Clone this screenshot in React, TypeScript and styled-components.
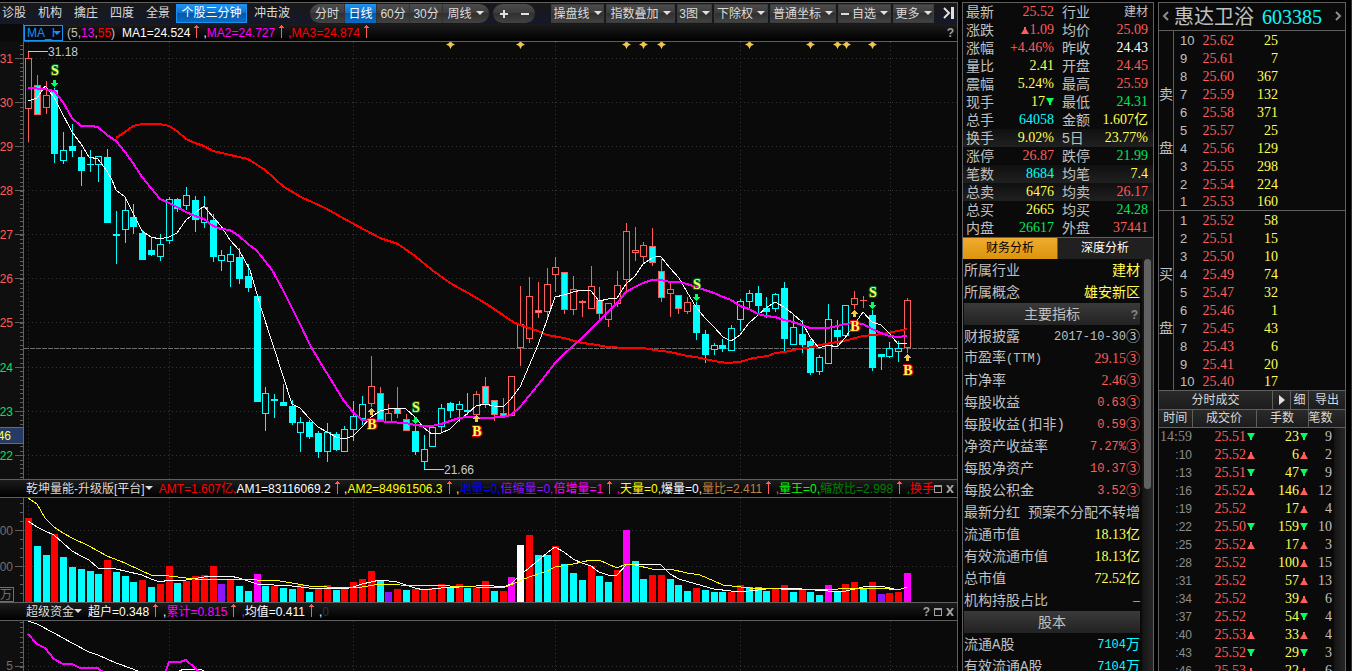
import React from "react";
import styled, { createGlobalStyle, css } from "styled-components";

const C = {
  bg: "#0a0a0a",
  line: "#5f5f5f",
  label: "#c0c0c0",
  white: "#ffffff",
  red: "#ff5c5c",
  green: "#00e65c",
  yellow: "#ffff54",
  cyan: "#00ffff",
  magenta: "#ff00ff",
  up: "#ff0000",
  grey: "#8c8c8c",
};

const sans = `"Liberation Sans", "Noto Sans CJK SC", sans-serif`;
const serif = `"Liberation Serif", "Noto Sans CJK SC", serif`;
const mono = `"Liberation Mono", "Noto Sans CJK SC", monospace`;

const GlobalStyle = createGlobalStyle`
  *, *::before, *::after { box-sizing: border-box; }
  body { margin: 0; background: #000; color: ${C.label}; font: 12px/18px ${sans}; overflow: hidden; }
  button, select { font: inherit; color: inherit; margin: 0; padding: 0; border: 0; background: none; cursor: pointer; }
  table { border-collapse: collapse; border-spacing: 0; }
  th, td { padding: 0; font-weight: 400; white-space: nowrap; }
  dl, dt, dd, h1, h2 { margin: 0; font-weight: 400; }
`;

/* ---------- page frame ---------- */

const Page = styled.main`
  display: grid;
  grid-template-columns: minmax(0, 1fr) 192px 188px;
  column-gap: 4px;
  height: 100vh;
  padding: 2px 5px 0 0;
  border-right: 1px solid #333;
  overflow: hidden;
`;

const ChartPanel = styled.section`
  display: flex;
  flex-direction: column;
  min-width: 0;
  min-height: 0;
  overflow: hidden;
  background: ${C.bg};
  border-top: 1px solid ${C.line};
  border-right: 1px solid ${C.line};
`;

const SidePanel = styled.section`
  display: flex;
  flex-direction: column;
  min-height: 0;
  overflow: hidden;
  background: ${C.bg};
  border: solid ${C.line};
  border-width: 1px 1px 0;
`;

/* ---------- toolbar ---------- */

const Toolbar = styled.nav`
  display: flex;
  align-items: center;
  flex: none;
  height: 21px;
  padding-left: 2px;
  background: linear-gradient(#191919, #15182a);
  color: #dcdcdc;
  white-space: nowrap;
  & > * { flex: none; }
`;

const LinkGroup = styled.div`
  display: flex;
  gap: 12px;
`;

const TextButton = styled.button`
  height: 19px;
  line-height: 19px;
`;

const blueFill = css`
  background: linear-gradient(#1f93ee, #0c6fd0 50%, #0459a8 50%, #0a6cc4);
  color: #fff;
`;

const ActiveButton = styled.button`
  ${blueFill}
  width: 71px;
  height: 19px;
  margin: 0 7px 0 6px;
  border: 1px solid #1a90f0;
  line-height: 17px;
`;

const Pill = styled.div<{ $left: number }>`
  display: flex;
  height: 19px;
  margin-left: ${(p) => p.$left}px;
  border-radius: 10px;
  overflow: hidden;
  background: linear-gradient(#4b4b4b, #3d3d3d 48%, #303030 50%, #424242);
`;

const PeriodButton = styled.button<{ $width: number; $active?: boolean }>`
  display: flex;
  align-items: center;
  justify-content: center;
  gap: 4px;
  width: ${(p) => p.$width}px;
  border-right: 1px solid #333;
  ${(p) => p.$active && blueFill}
`;

const ZoomButton = styled.button`
  display: flex;
  align-items: center;
  justify-content: center;
  width: 21px;
`;

const MenuGroup = styled.div`
  display: flex;
  gap: 2px;
  margin-left: 16px;
`;

const MenuButton = styled.button<{ $width: number }>`
  display: flex;
  align-items: center;
  justify-content: center;
  gap: 4px;
  width: ${(p) => p.$width}px;
  height: 19px;
  border: 1px solid #3c3c3c;
  background: linear-gradient(#4b4b4b, #3d3d3d 48%, #303030 50%, #424242);
`;

const CollapseButton = styled.button`
  display: flex;
  margin: 0 2px 0 auto;
`;

/* ---------- chart headers ---------- */

const PlotHeader = styled.header`
  display: flex;
  align-items: center;
  flex: none;
  height: 18px;
  margin-left: 23px;
  padding: 0 3px;
  border-left: 1px solid ${C.line};
  border-bottom: 1px solid ${C.line};
  background: linear-gradient(#1c1c1c, #000);
  white-space: nowrap;
`;

const SubHeader = styled(PlotHeader)`
  height: 19px;
  margin-left: 0;
  padding-left: 26px;
  border-left: 0;
  border-top: 1px solid ${C.line};
`;

const SelectWrap = styled.label`
  position: relative;
  display: flex;
  margin: 0 4px 0 -3px;
`;

const IndicatorSelect = styled.select`
  appearance: none;
  width: 39px;
  height: 16px;
  padding: 0 0 0 2px;
  border: 1px solid #1a90f0;
  background: #050a12;
  color: #1a90f0;
  line-height: 14px;
  text-overflow: clip;
`;

const SelectCaret = styled.span`
  position: absolute;
  right: 2px;
  top: 6px;
  display: flex;
  pointer-events: none;
`;

const Readings = styled.div`
  display: flex;
  flex: 1;
  min-width: 0;
  overflow: hidden;
  white-space: pre;
`;

const Reading = styled.span<{ $color: string }>`
  color: ${(p) => p.$color};
`;

const NameButton = styled.button`
  display: flex;
  align-items: center;
  margin-right: 6px;
  color: #dcdcdc;
`;

const Params = styled.span`
  margin-right: 7px;
`;

const WindowButtons = styled.div`
  display: flex;
  align-items: center;
  gap: 4px;
  flex: none;
  color: #a0a0a0;
`;

const IconButton = styled.button`
  display: flex;
  font-weight: 700;
  line-height: 16px;
`;

const Plot = styled.svg<{ $height?: number }>`
  display: block;
  width: 100%;
  ${(p) => (p.$height ? `flex: none; height: ${p.$height}px;` : "flex: 1; min-height: 0;")}
  font: 12px ${sans};
`;

/* ---------- quote panel ---------- */

const QuoteTable = styled.table`
  flex: none;
  width: 100%;
  table-layout: fixed;
  border-bottom: 1px solid ${C.line};
`;

const QuoteRow = styled.tr<{ $tint?: boolean }>`
  height: 18px;
  ${(p) => p.$tint && "background: linear-gradient(#101010, #202020);"}
`;

const QuoteLabel = styled.th`
  padding-left: 3px;
  font-size: 14px;
  line-height: 18px;
  text-align: left;
`;

const QuoteValue = styled.td<{ $color: string; $small?: boolean }>`
  padding-right: 5px;
  font: ${(p) => (p.$small ? 12 : 14)}px/18px ${serif};
  color: ${(p) => p.$color};
  text-align: right;
`;

const Tabs = styled.div`
  display: grid;
  grid-template-columns: 1fr 1fr;
  flex: none;
  height: 21px;
`;

const Tab = styled.button<{ $active?: boolean }>`
  line-height: 21px;
  color: ${(p) => (p.$active ? "#000" : "#fff")};
  background: ${(p) => (p.$active ? "linear-gradient(#f0ac30, #dc940c)" : "#202020")};
  border-right: 1px solid ${(p) => (p.$active ? C.line : "transparent")};
`;

const Scroller = styled.div`
  display: flex;
  flex: 1;
  min-height: 0;
  overflow: hidden;
`;

const Facts = styled.dl`
  flex: 1;
  min-width: 0;
  padding: 0 2px 0 1px;
`;

const Fact = styled.div`
  display: flex;
  align-items: center;
  justify-content: space-between;
  height: 22px;
  padding-top: 1px;
  font-size: 14px;
  white-space: nowrap;
`;

const FactName = styled.dt`
  font-family: ${mono};
`;

const FactValue = styled.dd<{ $color: string; $font: string }>`
  display: flex;
  align-items: center;
  color: ${(p) => p.$color};
  font-family: ${(p) => p.$font};
`;

const Figure = styled.span<{ $mono?: boolean }>`
  font-size: ${(p) => (p.$mono ? 12 : 14)}px;
`;

const FactHeading = styled.dt`
  display: flex;
  justify-content: center;
  position: relative;
  height: 22px;
  line-height: 22px;
  font-size: 14px;
  background: linear-gradient(#3a3a3a, #222);
`;

const HelpMark = styled.button`
  position: absolute;
  right: 2px;
  top: 2px;
  font: 700 12px/20px ${sans};
  color: #888;
`;

const Track = styled.div`
  flex: none;
  width: 11px;
  padding: 0 2px;
  background: linear-gradient(90deg, #141414, #262626);
`;

const Thumb = styled.div`
  height: 230px;
  border-radius: 4px;
  background: #616161;
`;

/* ---------- order book ---------- */

const StockTitle = styled.header`
  display: flex;
  align-items: center;
  gap: 5px;
  flex: none;
  height: 28px;
  padding: 0 3px;
  border-bottom: 1px solid ${C.line};
`;

const StockName = styled.h1`
  display: flex;
  flex: 1;
  gap: 8px;
  font: 20px/26px ${serif};
`;

const Code = styled.span`
  color: ${C.cyan};
`;

const Book = styled.div`
  display: flex;
  flex: none;
  border-bottom: 1px solid ${C.line};
`;

const Side = styled.div`
  display: flex;
  flex-direction: column;
  align-items: center;
  justify-content: center;
  gap: 40px;
  width: 15px;
  border-right: 1px solid ${C.line};
  font-size: 14px;
  line-height: 14px;
`;

const BookTable = styled.table`
  width: 104px;
  table-layout: fixed;
`;

const Level = styled.tr`
  height: 18px;
  &:last-child { height: 17px; }
`;

const LevelNo = styled.th`
  padding-left: 6px;
  font-size: 13px;
  line-height: 17px;
  text-align: left;
`;

const Num = styled.td<{ $color: string }>`
  font: 14px/17px ${serif};
  color: ${(p) => p.$color};
  text-align: right;
`;

const Bar = styled.div`
  display: flex;
  flex: none;
  height: 19px;
  border-bottom: 1px solid ${C.line};
  background: linear-gradient(#2a2a2a, #1c1c1c);
  color: #d8d8d8;
`;

const BarTitle = styled.h2`
  flex: 1;
  font-size: 12px;
  text-align: center;
`;

const BarButton = styled.button<{ $width: number }>`
  display: flex;
  align-items: center;
  justify-content: center;
  width: ${(p) => p.$width}px;
  border-left: 1px solid ${C.line};
`;

const Trades = styled.table`
  width: 100%;
  flex: none;
  table-layout: fixed;
`;

const TradeHead = styled.th`
  height: 17px;
  border-right: 1px solid ${C.line};
  border-bottom: 1px solid ${C.line};
  background: linear-gradient(#2a2a2a, #1c1c1c);
  color: #d8d8d8;
  font-size: 12px;
  line-height: 16px;
  &:last-child { border-right: 0; text-align: left; }
`;

const TradeTime = styled.td<{ $first: boolean }>`
  height: 18px;
  font: ${(p) => (p.$first ? `14px/18px ${serif}` : `12px/18px ${sans}`)};
  color: ${C.grey};
  text-align: right;
`;

const TradeNum = styled(Num)`
  line-height: 18px;
`;

const TradeCount = styled(TradeNum)`
  padding-right: 2px;
`;

const Mark = styled.span`
  display: inline-flex;
  width: 9px;
  justify-content: center;
`;

const TradeList = styled.div`
  flex: 1;
  min-width: 0;
`;

/* ---------- small glyphs ---------- */

const Caret = ({ color = "#e0e0e0" }: { color?: string }) => (
  <svg width="8" height="5" viewBox="0 0 8 5" aria-hidden="true">
    <path d="M0 0h8L4 4z" fill={color} />
  </svg>
);

const UpArrow = ({ wide }: { wide?: boolean }) => (
  <svg width={wide ? 14 : 13} height="18" shapeRendering="crispEdges" aria-hidden="true">
    <path d="M6 1h1v13H6zM5 2h3v1H5zM4 3h5v1H4z" fill={C.red} />
  </svg>
);

const Tri = ({ dir }: { dir?: string }) => (
  <Mark>
    {dir && (
      <svg width="8" height="8" viewBox="0 0 8 8" aria-hidden="true">
        {dir === "u" ? (
          <path d="M0 8h8L5 3V1H3v2z" fill={C.red} />
        ) : (
          <path d="M0 0h8L5 5v2H3V5z" fill="#00ff60" />
        )}
      </svg>
    )}
  </Mark>
);

const MaxIcon = () => (
  <svg width="8" height="8" viewBox="0 0 8 8" shapeRendering="crispEdges" aria-hidden="true">
    <path d="M0 0h8v8H0zM1 2v5h6V2z" fill="#a0a0a0" fillRule="evenodd" />
  </svg>
);

const CloseIcon = () => (
  <svg width="8" height="8" viewBox="0 0 8 8" aria-hidden="true">
    <path d="M1 0l6 8M7 0L1 8" stroke="#a0a0a0" strokeWidth="2" />
  </svg>
);

const Chevron = ({ left }: { left?: boolean }) => (
  <svg width="7" height="10" viewBox="0 0 7 10" aria-hidden="true">
    <path d={left ? "M6 1L2 5l4 4" : "M1 1l4 4-4 4"} stroke="#8c8c8c" strokeWidth="2" fill="none" />
  </svg>
);

/* ---------- chart data ---------- */

/* Kinds: r hollow red, c hollow cyan, C solid cyan, m solid cyan with a red edge. */
type Candle = [high: number, low: number, top: number, bottom: number, kind: string];

const candles: Candle[] = [
  [51, 142, 58, 109, "r"], [75, 114, 85, 115, "m"], [81, 114, 95, 108, "r"], [88, 163, 90, 154, "C"],
  [132, 164, 150, 161, "c"], [124, 157, 146, 151, "C"], [150, 186, 157, 171, "C"], [150, 172, 164, 165, "C"],
  [156, 182, 156, 165, "c"], [149, 223, 157, 223, "C"], [211, 264, 234, 236, "C"], [199, 243, 210, 230, "c"],
  [204, 234, 217, 227, "C"], [230, 260, 233, 260, "C"], [237, 256, 250, 255, "C"], [234, 261, 244, 257, "c"],
  [197, 244, 199, 241, "c"], [198, 212, 199, 209, "C"], [187, 210, 195, 206, "c"], [196, 232, 200, 220, "C"],
  [196, 228, 207, 223, "c"], [214, 262, 220, 257, "C"], [250, 271, 255, 261, "c"], [246, 287, 254, 262, "c"],
  [248, 284, 257, 279, "C"], [264, 292, 276, 288, "C"], [296, 402, 296, 402, "C"], [387, 431, 393, 414, "c"],
  [394, 418, 399, 401, "C"], [384, 406, 402, 406, "C"], [400, 425, 406, 423, "C"], [417, 452, 422, 433, "c"],
  [420, 439, 422, 437, "C"], [431, 458, 433, 452, "C"], [423, 462, 432, 452, "c"], [432, 451, 434, 450, "C"],
  [426, 452, 429, 452, "c"], [401, 441, 416, 430, "c"], [396, 425, 404, 419, "c"], [356, 407, 386, 404, "r"],
  [387, 420, 393, 420, "m"], [404, 422, 413, 423, "r"], [387, 418, 408, 414, "m"], [414, 431, 419, 431, "m"],
  [424, 455, 431, 452, "C"], [435, 470, 449, 462, "c"], [427, 447, 427, 447, "c"], [404, 432, 408, 427, "c"],
  [402, 418, 403, 411, "C"], [401, 422, 404, 410, "c"], [393, 415, 410, 412, "C"], [391, 417, 394, 415, "r"],
  [377, 408, 386, 404, "m"], [400, 421, 400, 415, "m"], [398, 416, 413, 416, "m"], [376, 416, 376, 416, "r"],
  [286, 366, 324, 348, "r"], [277, 343, 296, 339, "r"], [282, 318, 310, 313, "m"], [268, 317, 284, 312, "r"],
  [257, 292, 267, 275, "r"], [272, 314, 272, 310, "m"], [276, 315, 289, 310, "r"], [300, 317, 301, 303, "r"],
  [266, 309, 286, 309, "r"], [287, 322, 300, 314, "m"], [303, 327, 303, 320, "r"], [271, 307, 285, 304, "r"],
  [223, 292, 231, 280, "r"], [227, 261, 250, 253, "r"], [242, 263, 245, 257, "r"], [228, 266, 246, 263, "m"],
  [259, 302, 271, 298, "m"], [283, 317, 289, 294, "r"], [295, 314, 295, 309, "m"], [297, 314, 302, 312, "r"],
  [302, 340, 305, 333, "C"], [330, 363, 334, 355, "C"], [343, 355, 345, 350, "c"], [339, 352, 345, 349, "C"],
  [325, 351, 328, 351, "c"], [299, 331, 301, 320, "c"], [290, 310, 293, 302, "c"], [286, 314, 293, 306, "C"],
  [297, 318, 308, 312, "C"], [293, 312, 294, 309, "c"], [282, 352, 288, 339, "C"], [315, 345, 327, 345, "c"],
  [320, 353, 334, 345, "C"], [339, 375, 341, 373, "C"], [355, 375, 357, 372, "c"], [304, 364, 319, 364, "c"],
  [320, 347, 330, 337, "C"], [305, 336, 305, 336, "c"], [291, 309, 298, 305, "r"], [296, 308, 300, 301, "r"],
  [310, 371, 315, 368, "C"], [354, 370, 354, 357, "C"], [342, 358, 348, 357, "c"], [341, 362, 348, 352, "c"],
  [298, 353, 300, 348, "r"],
];

const candleX = (i: number) => Math.round(28 + 8.79 * i);

const ma5 =
  "28,101 37,98 45,86 54,97 60,109 72,132 81,144 89,157 98,159 107,171 112,180 116,190 125,197 133,213 142,231 151,237 160,239 169,237 177,233 186,220 195,213 204,206 213,217 221,226 230,240 239,250 250,270 261,308 274,348 292,404 300,408 309,418 318,427 327,432 336,437 344,439 353,436 362,427 371,417 380,411 388,409 397,408 406,409 415,417 424,428 432,434 441,433 450,429 459,420 468,413 476,406 485,404 494,406 503,407 511,399 520,387 529,366 538,345 547,320 555,297 564,295 573,292 582,290 591,291 599,301 608,299 617,298 626,284 635,276 643,264 652,258 658,256 661,257 670,268 679,278 687,292 696,307 705,318 714,327 723,337 731,341 740,335 749,323 758,315 766,308 775,302 784,307 793,314 802,322 810,337 819,348 828,345 837,347 845,338 854,325 863,312 872,322 881,325 889,333 898,344 907,343";
const ma13 =
  "28,88 45,89 54,91 63,102 72,118 81,126 91,126 98,127 107,135 116,141 125,152 133,163 142,177 151,188 160,199 169,203 177,207 186,212 195,216 204,219 213,226 221,229 230,230 239,236 248,244 256,250 262,257 272,270 283,290 292,308 301,326 310,345 320,362 328,375 336,388 344,401 353,412 362,420 371,420 388,422 406,423 415,425 424,426 432,426 441,424 450,421 459,418 468,417 485,418 503,417 511,415 520,407 542,380 555,363 564,354 573,346 582,338 591,329 599,321 608,312 617,303 626,292 635,287 643,283 652,280 661,280 670,282 679,282 687,284 696,287 705,290 714,293 723,297 731,300 740,306 749,309 758,314 766,316 775,317 784,320 793,322 802,325 810,328 828,328 837,326 845,324 854,323 863,324 872,329 881,333 889,336 898,337 907,336";
const ma55 =
  "116,138 125,132 133,126 142,124 160,124 169,126 177,131 186,139 195,143 204,146 213,151 239,157 248,159 265,170 284,187 301,197 325,208 350,222 380,238 398,244 415,256 432,270 450,283 468,293 485,303 503,315 513,322 520,325 538,331 547,335 564,338 582,343 591,344 608,347 626,348 643,348 661,351 670,352 687,356 696,357 714,361 727,363 740,362 753,358 768,356 775,353 785,352 798,349 807,348 820,345 837,342 848,340 863,336 883,334 893,332 907,329";

const gridX = [28, 169, 353, 555, 740, 890];
const priceLevels: [string, number][] = [
  ["31", 58], ["30", 102], ["29", 146], ["28", 190], ["27", 234],
  ["26", 278], ["25", 322], ["24", 367], ["23", 411], ["22", 455],
];
const diamonds = [450, 520, 626, 643, 661, 749, 810, 837, 846, 872];
const signals: [string, number, number][] = [
  ["S", 54, 70], ["S", 415, 407], ["S", 696, 284], ["S", 872, 292],
  ["B", 371, 424], ["B", 476, 431], ["B", 854, 326], ["B", 907, 370],
];

const volumeKinds =
  "rccrccccc" + "rccc" + "rcrrcrrrr" + "prccmcrccrcrrcrrrr" + "cprcrrrrcrcrrcrmwrccrcccrccrmccrrcccrcccrrcccrrcrccmcrrcrprrm";
const volumeTops = [
  518, 546, 555, 534, 557, 567, 569, 571, 574, 560, 572, 576, 582, 580, 587, 584, 566, 583, 581, 576, 575, 566, 584,
  579, 586, 591, 574, 586, 586, 588, 589, 584, 592, 589, 585, 590, 589, 582, 579, 571, 581, 592, 589, 590, 589, 589,
  588, 584, 588, 584, 588, 588, 581, 591, 591, 577, 545, 535, 555, 555, 546, 564, 573, 580, 566, 576, 582, 570, 530,
  561, 579, 575, 575, 579, 585, 591, 588, 590, 592, 592, 592, 585, 587, 587, 591, 589, 585, 592, 590, 592, 595, 585,
  591, 584, 582, 589, 582, 594, 593, 592, 573,
];
const volumeFill: Record<string, string> = {
  r: C.up, c: C.cyan, m: C.magenta, p: "#8c14ff", w: "#ffffff",
};
const volumeFast =
  "28,521 37,527 45,531 54,535 63,543 72,551 81,556 89,560 98,568 116,569 125,571 142,575 151,579 160,582 169,580 186,580 204,577 213,576 230,576 239,578 248,581 257,584 274,585 292,586 309,588 344,589 353,587 362,584 380,580 397,582 406,585 415,588 424,590 441,588 459,587 476,586 485,585 503,587 511,584 520,575 529,568 547,553 555,547 564,552 573,559 582,563 591,566 599,572 608,575 617,575 626,565 645,564 661,565 670,574 679,579 696,584 714,589 731,591 749,591 775,588 802,589 828,591 846,591 863,587 881,586 898,590 907,587";
const volumeSlow =
  "28,498 37,504 45,518 54,527 63,533 72,538 89,546 107,556 125,563 142,571 151,575 169,576 186,578 195,579 239,579 257,580 274,580 292,583 309,586 327,587 344,588 362,587 380,584 400,585 450,586 476,587 505,587 515,583 529,577 547,571 555,567 573,564 591,560 599,560 617,568 626,564 635,565 652,569 670,569 687,573 700,575 714,581 723,585 750,588 780,589 830,590 846,588 880,588 898,590 907,587";

/* ---------- plots ---------- */

const range = (from: number, to: number, step: number) => {
  const out: number[] = [];
  for (let v = from; v < to; v += step) out.push(Math.round(v));
  return out;
};

const Grid = ({ top, bottom, rows }: { top: number; bottom: number; rows: number[] }) => (
  <g fill="none" stroke="#363636" strokeDasharray="1 3">
    {gridX.map((x) => (
      <path key={x} d={`M${x + 0.5} ${top}V${bottom}`} />
    ))}
    {rows.map((y) => (
      <line key={y} x1="24" x2="100%" y1={y + 0.5} y2={y + 0.5} />
    ))}
  </g>
);

const Axis = ({ top, bottom, minor, major }: { top: number; bottom: number; minor: number[]; major: number[] }) => (
  <g fill={C.line}>
    <rect x="0" y={top} width="23" height={bottom - top} fill="#0f0f0f" />
    <rect x="23" y={top} width="1" height={bottom - top} />
    {minor.map((y) => (
      <rect key={y} x="20" y={y} width="3" height="1" />
    ))}
    {major.map((y) => (
      <rect key={y} x="15" y={y} width="8" height="1" />
    ))}
  </g>
);

const CandleShape = ({ x, data }: { x: number; data: Candle }) => {
  const [high, low, top, bottom, kind] = data;
  const edge = kind === "r" || kind === "m" ? C.red : C.cyan;
  const inner = kind === "m" || kind === "C" ? C.cyan : C.bg;
  const h = bottom - top;
  return (
    <g>
      <rect x={x} y={high} width="1" height={low - high} fill={edge} />
      <rect x={x - 3} y={top} width="7" height={h} fill={edge} />
      {h > 2 && <rect x={x - 2} y={top + 1} width="5" height={h - 2} fill={inner} />}
    </g>
  );
};

const Signal = ({ kind, x, y }: { kind: string; x: number; y: number }) => {
  const sell = kind === "S";
  return (
    <g>
      {sell ? (
        <path d={`M${x - 1} ${y + 10}h3v3h2l-3 4h-1l-3 -4h2z`} fill="#00ff60" />
      ) : (
        <path d={`M${x} ${y - 16}h1l3 4h-2v3h-3v-3h-2z`} fill="#f0c850" />
      )}
      <text
        x={x + 1}
        y={y + 5}
        textAnchor="middle"
        fontFamily="Liberation Serif"
        fontWeight="700"
        fontSize="14"
        fill="#ffff54"
        stroke={sell ? "#006b30" : "#d00000"}
        strokeWidth="2"
        paintOrder="stroke"
        strokeLinejoin="round"
      >
        {kind}
      </text>
    </g>
  );
};

const PricePlot = () => (
  <Plot $height={437} role="img" aria-label="日线">
    <g transform="translate(0 -42)" shapeRendering="crispEdges">
      <Grid top={42} bottom={479} rows={priceLevels.map((l) => l[1])} />
      <Axis top={42} bottom={479} minor={range(45, 479, 4.41)} major={priceLevels.map((l) => l[1])} />
      {priceLevels.map(([text, y], i) => (
        <text key={text} x="13" y={y + 5} textAnchor="end" fill={i < 7 ? C.red : C.green}>
          {text}
        </text>
      ))}
      <line x1="24" x2="100%" y1="348.5" y2="348.5" stroke="#6e6e6e" strokeDasharray="5 1" />
      {candles.map((c, i) => (
        <CandleShape key={i} x={candleX(i)} data={c} />
      ))}
      <g fill="none">
        <polyline points={ma55} stroke="#ff0000" strokeWidth="2" />
        <polyline points={ma5} stroke="#ffffff" />
        <polyline points={ma13} stroke={C.magenta} strokeWidth="2" />
      </g>
      <g fill="#c8c8c8">
        <rect x="28" y="51" width="20" height="1" />
        <rect x="424" y="469" width="20" height="1" />
        <text x="48" y="56">31.18</text>
        <text x="444" y="474">21.66</text>
      </g>
      <g fill="#f0c850" shapeRendering="auto">
        {diamonds.map((x) => (
          <path key={x} d={`M${x + 0.5} 40l1.5 3 3 1.5-3 1.5-1.5 3-1.5-3-3-1.5 3-1.5z`} />
        ))}
      </g>
      {signals.map(([kind, x, y]) => (
        <Signal key={`${kind}${x}`} kind={kind} x={x} y={y} />
      ))}
      <rect x="0" y="427" width="24" height="17" fill="#6b6b6b" />
      <rect x="0" y="428" width="23" height="15" fill="#263a66" />
      <text x="11" y="440" textAnchor="end" fill={C.yellow}>46</text>
    </g>
  </Plot>
);

const VolumePlot = () => (
  <Plot $height={104} role="img" aria-label="乾坤量能">
    <g transform="translate(0 -498)" shapeRendering="crispEdges">
      <Grid top={498} bottom={602} rows={[530, 566]} />
      <Axis top={498} bottom={602} minor={range(503, 602, 9)} major={[530, 566]} />
      <g fill="#707070">
        <text x="13" y="535" textAnchor="end">00</text>
        <text x="13" y="571" textAnchor="end">00</text>
        <path d="M0 587h14v15H0v-1h13v-13H0z" />
        <text x="12" y="599" textAnchor="end">万</text>
      </g>
      {volumeTops.map((y, i) => (
        <rect key={i} x={candleX(i) - 3} y={y} width="7" height={602 - y} fill={volumeFill[volumeKinds[i]]} />
      ))}
      <g fill="none">
        <polyline points={volumeFast} stroke="#ffffff" />
        <polyline points={volumeSlow} stroke="#ffff00" />
      </g>
    </g>
  </Plot>
);

const FundPlot = () => (
  <Plot role="img" aria-label="超级资金">
    <g transform="translate(0 -621)" shapeRendering="crispEdges">
      <Grid top={621} bottom={800} rows={[666]} />
      <Axis top={621} bottom={800} minor={range(622, 800, 5)} major={[666]} />
      <text x="13" y="670" textAnchor="end" fill="#707070">5</text>
      <g fill="none">
        <polyline points="28,621 37,624 54,633 72,643 89,652 98,655 116,663 133,669 142,673" stroke="#fff" />
        <polyline points="174,673 184,669 200,669 206,672" stroke="#fff" />
        <g stroke={C.magenta} strokeWidth="2">
          <polyline points="28,634 37,644 45,648 54,659 63,664 72,664 80,668 98,668 104,673" />
          <polyline points="165,673 169,662 180,662 186,660 195,668 200,673" />
        </g>
      </g>
    </g>
  </Plot>
);

/* ---------- panel data ---------- */

type Pair = [string, string, string];
const quotes: [Pair, Pair, boolean?][] = [
  [["最新", "25.52", C.red], ["行业", "建材", C.label]],
  [["涨跌", "▲1.09", C.red], ["均价", "25.09", C.red]],
  [["涨幅", "+4.46%", C.red], ["昨收", "24.43", C.white]],
  [["量比", "2.41", C.yellow], ["开盘", "24.45", C.red]],
  [["震幅", "5.24%", C.yellow], ["最高", "25.59", C.red]],
  [["现手", "17▼", C.yellow], ["最低", "24.31", C.green]],
  [["总手", "64058", C.cyan], ["金额", "1.607亿", C.yellow]],
  [["换手", "9.02%", C.yellow], ["5日", "23.77%", C.yellow], true],
  [["涨停", "26.87", C.red], ["跌停", "21.99", C.green]],
  [["笔数", "8684", C.cyan], ["均笔", "7.4", C.yellow], true],
  [["总卖", "6476", C.yellow], ["均卖", "26.17", C.red], true],
  [["总买", "2665", C.yellow], ["均买", "24.28", C.green]],
  [["内盘", "26617", C.green], ["外盘", "37441", C.red]],
];

const QuoteText = ({ text }: { text: string }) => {
  if (text[0] === "▲") return <><Tri dir="u" />{text.slice(1)}</>;
  if (text.endsWith("▼")) return <>{text.slice(0, -1)}<Tri dir="d" /></>;
  return <>{text}</>;
};

type FactRow = { name: string; value?: string; unit?: string; color?: string; fixed?: boolean; help?: boolean };
const facts: FactRow[] = [
  { name: "所属行业", value: "建材", color: C.yellow },
  { name: "所属概念", value: "雄安新区", color: C.yellow },
  { name: "主要指标", help: true },
  { name: "财报披露", value: "2017-10-30", unit: "③", color: C.label, fixed: true },
  { name: "市盈率(TTM)", value: "29.15", unit: "③", color: C.red },
  { name: "市净率", value: "2.46", unit: "③", color: C.red },
  { name: "每股收益", value: "0.63", unit: "③", color: C.red, fixed: true },
  { name: "每股收益(扣非)", value: "0.59", unit: "③", color: C.red, fixed: true },
  { name: "净资产收益率", value: "7.27%", unit: "③", color: C.red, fixed: true },
  { name: "每股净资产", value: "10.37", unit: "③", color: C.red, fixed: true },
  { name: "每股公积金", value: "3.52", unit: "③", color: C.red, fixed: true },
  { name: "最新分红", value: "预案不分配不转增", color: C.label },
  { name: "流通市值", value: "18.13", unit: "亿", color: C.yellow },
  { name: "有效流通市值", value: "18.13", unit: "亿", color: C.yellow },
  { name: "总市值", value: "72.52", unit: "亿", color: C.yellow },
  { name: "机构持股占比", value: "–", color: C.label },
  { name: "股本" },
  { name: "流通A股", value: "7104", unit: "万", color: C.cyan, fixed: true },
  { name: "有效流通A股", value: "7104", unit: "万", color: C.cyan, fixed: true },
];

const asks: [string, string, string][] = [
  ["10", "25.62", "25"], ["9", "25.61", "7"], ["8", "25.60", "367"], ["7", "25.59", "132"], ["6", "25.58", "371"],
  ["5", "25.57", "25"], ["4", "25.56", "129"], ["3", "25.55", "298"], ["2", "25.54", "224"], ["1", "25.53", "160"],
];
const bids: [string, string, string][] = [
  ["1", "25.52", "58"], ["2", "25.51", "15"], ["3", "25.50", "10"], ["4", "25.49", "74"], ["5", "25.47", "32"],
  ["6", "25.46", "1"], ["7", "25.45", "43"], ["8", "25.43", "6"], ["9", "25.41", "20"], ["10", "25.40", "17"],
];

const trades: [string, string, string, string, string, string][] = [
  ["14:59", "25.51", "d", "23", "d", "9"],
  [":10", "25.52", "u", "6", "u", "2"],
  [":13", "25.51", "d", "47", "d", "9"],
  [":16", "25.52", "u", "146", "u", "12"],
  [":19", "25.52", "", "17", "u", "4"],
  [":22", "25.50", "d", "159", "d", "10"],
  [":25", "25.52", "u", "17", "u", "3"],
  [":28", "25.52", "", "100", "u", "15"],
  [":31", "25.52", "", "57", "u", "13"],
  [":34", "25.52", "", "39", "u", "6"],
  [":37", "25.52", "", "54", "d", "4"],
  [":40", "25.53", "u", "33", "u", "4"],
  [":43", "25.52", "d", "29", "d", "3"],
  [":46", "25.53", "u", "22", "u", "6"],
];

const BookSide = ({ name, levels }: { name: string; levels: [string, string, string][] }) => (
  <Book>
    <Side>
      {name.split("").map((ch) => (
        <span key={ch}>{ch}</span>
      ))}
    </Side>
    <BookTable>
      <colgroup>
        <col width="28" />
        <col width="32" />
        <col width="44" />
      </colgroup>
      <tbody>
        {levels.map(([no, price, lots]) => (
          <Level key={no}>
            <LevelNo scope="row">{no}</LevelNo>
            <Num $color={C.red}>{price}</Num>
            <Num $color={C.yellow}>{lots}</Num>
          </Level>
        ))}
      </tbody>
    </BookTable>
  </Book>
);

const menus: [string, number][] = [
  ["操盘线", 53], ["指数叠加", 69], ["3图", 35], ["下除权", 54], ["普通坐标", 66], ["自选", 53], ["更多", 41],
];

const Dash = () => (
  <svg width="8" height="2" aria-hidden="true">
    <path d="M0 0h8v2H0z" fill="#dcdcdc" />
  </svg>
);

const MenuLabel = styled.span`
  display: flex;
  align-items: center;
  gap: 3px;
`;

export default function App() {
  return (
    <>
      <GlobalStyle />
      <Page>
        <ChartPanel>
          <Toolbar>
            <LinkGroup>
              {["诊股", "机构", "擒庄", "四度", "全景"].map((t) => (
                <TextButton key={t}>{t}</TextButton>
              ))}
            </LinkGroup>
            <ActiveButton>个股三分钟</ActiveButton>
            <TextButton>冲击波</TextButton>
            <Pill $left={20}>
              <PeriodButton $width={35}>分时</PeriodButton>
              <PeriodButton $width={32} $active>日线</PeriodButton>
              <PeriodButton $width={33}>60分</PeriodButton>
              <PeriodButton $width={33}>30分</PeriodButton>
              <PeriodButton $width={46} aria-haspopup="menu">周线<Caret /></PeriodButton>
            </Pill>
            <Pill $left={4}>
              <ZoomButton aria-label="放大">
                <svg width="8" height="8" aria-hidden="true"><path d="M0 3h3V0h2v3h3v2H5v3H3V5H0z" fill="#e0e0e0" /></svg>
              </ZoomButton>
              <ZoomButton aria-label="缩小">
                <svg width="8" height="8" aria-hidden="true"><path d="M0 3h8v2H0z" fill="#e0e0e0" /></svg>
              </ZoomButton>
            </Pill>
            <MenuGroup>
              {menus.map(([t, width]) => (
                <MenuButton key={t} $width={width} aria-haspopup="menu">
                  <MenuLabel>{t === "自选" && <Dash />}{t}</MenuLabel>
                  <Caret />
                </MenuButton>
              ))}
            </MenuGroup>
            <CollapseButton aria-label="收起">
              <svg width="12" height="13" viewBox="0 0 12 13" aria-hidden="true">
                <path d="M1 1l5 5-5 5" fill="none" stroke="#e0e0e0" strokeWidth="2" />
                <path d="M8 0h3v12H8z" fill="#e0e0e0" />
              </svg>
            </CollapseButton>
          </Toolbar>

          <PlotHeader>
            <SelectWrap>
              <IndicatorSelect aria-label="指标" defaultValue="MA_I">
                <option>MA_I</option>
              </IndicatorSelect>
              <SelectCaret><Caret color="#1a90f0" /></SelectCaret>
            </SelectWrap>
            <Params>
              (5,<Reading $color={C.magenta}>13</Reading>,<Reading $color={C.up}>55</Reading>)
            </Params>
            <Readings>
              <Reading $color={C.white}>MA1=24.524</Reading><UpArrow />
              <Reading $color={C.white}>,</Reading><Reading $color={C.magenta}>MA2=24.727</Reading><UpArrow />
              <Reading $color={C.magenta}>,</Reading><Reading $color={C.up}>MA3=24.874</Reading><UpArrow />
            </Readings>
            <WindowButtons><IconButton>?</IconButton></WindowButtons>
          </PlotHeader>
          <PricePlot />

          <SubHeader>
            <NameButton aria-haspopup="menu">乾坤量能-升级版[平台]<Caret /></NameButton>
            <Readings>
              <Reading $color={C.up}>AMT=1.607亿,</Reading>
              <Reading $color={C.white}>AM1=83116069.2</Reading><UpArrow wide />
              <Reading $color={C.white}>,</Reading><Reading $color="#ffff00">AM2=84961506.3</Reading><UpArrow wide />
              <Reading $color="#ffff00">,</Reading><Reading $color="#0000ff">地量=0,</Reading>
              <Reading $color="#8c14ff">倍缩量=0,</Reading>
              <Reading $color={C.magenta}>倍增量=1</Reading><UpArrow wide />
              <Reading $color={C.magenta}>,</Reading><Reading $color="#ffff00">天量=0,</Reading>
              <Reading $color={C.white}>爆量=0,</Reading>
              <Reading $color="#c08040">量比=2.411</Reading><UpArrow wide />
              <Reading $color="#c08040">,</Reading><Reading $color="#00ff00">量王=0,</Reading>
              <Reading $color="#008000">缩放比=2.998</Reading><UpArrow wide />
              <Reading $color="#008000">,</Reading><Reading $color={C.up}>换手</Reading>
            </Readings>
            <WindowButtons>
              <IconButton aria-label="最大化"><MaxIcon /></IconButton>
              <IconButton aria-label="关闭"><CloseIcon /></IconButton>
            </WindowButtons>
          </SubHeader>
          <VolumePlot />

          <SubHeader>
            <NameButton aria-haspopup="menu">超级资金<Caret /></NameButton>
            <Readings>
              <Reading $color={C.white}>超户=0.348</Reading><UpArrow wide />
              <Reading $color={C.white}>,</Reading><Reading $color={C.magenta}>累计=0.815</Reading><UpArrow wide />
              <Reading $color={C.magenta}>,</Reading><Reading $color={C.white}>均值=0.411</Reading><UpArrow wide />
              <Reading $color={C.white}>,</Reading><Reading $color="#333333">0</Reading>
            </Readings>
            <WindowButtons>
              <IconButton>?</IconButton>
              <IconButton aria-label="最大化"><MaxIcon /></IconButton>
              <IconButton aria-label="关闭"><CloseIcon /></IconButton>
            </WindowButtons>
          </SubHeader>
          <FundPlot />
        </ChartPanel>

        <SidePanel>
          <QuoteTable>
            <colgroup>
              <col width="36" />
              <col width="60" />
              <col width="36" />
              <col width="58" />
            </colgroup>
            <tbody>
              {quotes.map(([a, b, tint]) => (
                <QuoteRow key={a[0]} $tint={tint}>
                  <QuoteLabel scope="row">{a[0]}</QuoteLabel>
                  <QuoteValue $color={a[2]}><QuoteText text={a[1]} /></QuoteValue>
                  <QuoteLabel scope="row">{b[0]}</QuoteLabel>
                  <QuoteValue $color={b[2]} $small={b[1] === "建材"}><QuoteText text={b[1]} /></QuoteValue>
                </QuoteRow>
              ))}
            </tbody>
          </QuoteTable>
          <Tabs role="tablist">
            <Tab role="tab" aria-selected="true" $active>财务分析</Tab>
            <Tab role="tab" aria-selected="false">深度分析</Tab>
          </Tabs>
          <Scroller>
            <Facts>
              {facts.map((f) =>
                f.value ? (
                  <Fact key={f.name}>
                    <FactName>
                      {f.name.split(/(\(TTM\))/).map((part, i) => <Figure key={i} $mono={part === "(TTM)"}>{part}</Figure>)}
                    </FactName>
                    <FactValue $color={f.color!} $font={f.fixed ? mono : serif}>
                      <Figure $mono={f.fixed}>{f.value}</Figure>
                      {f.unit}
                    </FactValue>
                  </Fact>
                ) : (
                  <FactHeading key={f.name}>
                    {f.name}
                    {f.help && <HelpMark>?</HelpMark>}
                  </FactHeading>
                ),
              )}
            </Facts>
            <Track><Thumb /></Track>
          </Scroller>
        </SidePanel>

        <SidePanel>
          <StockTitle>
            <button aria-label="上一只"><Chevron left /></button>
            <StockName>惠达卫浴<Code>603385</Code></StockName>
            <button aria-label="下一只"><Chevron /></button>
          </StockTitle>
          <BookSide name="卖盘" levels={asks} />
          <BookSide name="买盘" levels={bids} />
          <Bar>
            <BarTitle>分时成交</BarTitle>
            <BarButton $width={18} aria-label="展开">
              <svg width="6" height="10" aria-hidden="true"><path d="M0 0l6 5-6 5z" fill="#e0e0e0" /></svg>
            </BarButton>
            <BarButton $width={18}>细</BarButton>
            <BarButton $width={37}>导出</BarButton>
          </Bar>
          <Trades>
            <colgroup>
              <col width="33" />
              <col width="64" />
              <col width="52" />
              <col />
            </colgroup>
            <thead>
              <tr>
                <TradeHead>时间</TradeHead>
                <TradeHead>成交价</TradeHead>
                <TradeHead>手数</TradeHead>
                <TradeHead>笔数</TradeHead>
              </tr>
            </thead>
          </Trades>
          <Scroller>
            <TradeList>
              <Trades aria-label="分时成交">
                <colgroup>
                  <col width="33" />
                  <col width="63" />
                  <col width="53" />
                  <col />
                </colgroup>
                <tbody>
                  {trades.map(([time, price, d1, lots, d2, count]) => (
                    <tr key={time}>
                      <TradeTime $first={time.length > 3}>{time}</TradeTime>
                      <TradeNum $color={C.red}>{price}<Tri dir={d1} /></TradeNum>
                      <TradeNum $color={C.yellow}>{lots}<Tri dir={d2} /></TradeNum>
                      <TradeCount $color={C.label}>{count}</TradeCount>
                    </tr>
                  ))}
                </tbody>
              </Trades>
            </TradeList>
            <Track />
          </Scroller>
        </SidePanel>
      </Page>
    </>
  );
}
